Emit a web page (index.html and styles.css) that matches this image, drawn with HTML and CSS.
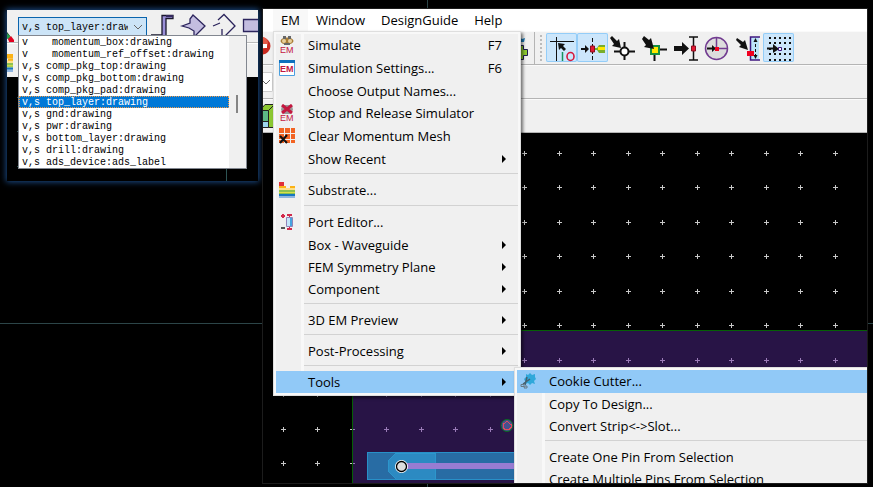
FILE: index.html
```html
<!DOCTYPE html>
<html lang="en">
<head>
<meta charset="utf-8">
<title>Layout editor</title>
<link rel="stylesheet" href="styles.css">
</head>
<body>
<svg class="defs" aria-hidden="true">
  <defs>
    <path id="cross" d="M-2 .5h5M.5-2v5"/>
    <g id="row">
      <use href="#cross" x="283"/><use href="#cross" x="317"/><use href="#cross" x="352"/><use href="#cross" x="386"/><use href="#cross" x="421"/><use href="#cross" x="455"/><use href="#cross" x="490"/><use href="#cross" x="524"/><use href="#cross" x="559"/><use href="#cross" x="593"/><use href="#cross" x="628"/><use href="#cross" x="662"/><use href="#cross" x="697"/><use href="#cross" x="731"/><use href="#cross" x="766"/><use href="#cross" x="800"/><use href="#cross" x="835"/>
    </g>
    <g id="grid">
      <use href="#row" y="153"/><use href="#row" y="187"/><use href="#row" y="222"/><use href="#row" y="256"/><use href="#row" y="291"/><use href="#row" y="325"/><use href="#row" y="360"/><use href="#row" y="394"/><use href="#row" y="429"/><use href="#row" y="463"/>
    </g>
    <g id="substrate">
      <path fill="#e0303a" d="M0 0h5v4H0z"/>
      <path fill="#fbb216" d="M0 4h7v2h4V4h5v4H0z"/>
      <path fill="#fde08a" d="M0 6h16v2H0z"/>
      <path fill="#8cc152" d="M0 8h16v4H0z"/>
      <path fill="#d9e04a" d="M0 10h16v1H0z"/>
      <path fill="#1878c0" d="M0 12h16v2H0z"/>
      <path fill="#8fb5e0" d="M0 14h16v2H0z"/>
    </g>
    <clipPath id="board"><path d="M353 331h520v160H353z"/></clipPath>
  </defs>
</svg>

<div class="desktop">
  <section class="window layers" aria-label="Layer selection">
    <div class="bar bar-top">
      <svg class="pen" width="8" height="24" viewBox="0 0 8 24"><path fill="#111" d="M0 8l3 4-3 3z"/><path fill="#2a9c4c" d="M0 9l4 4-2 3-2-2z"/><path fill="#e2001f" d="M1 15l3-3 3 4v4H3z"/></svg>
      <div class="combo">
        <label class="hidden" for="layer">Layer</label>
        <select id="layer"><option>v,s top_layer:drawing</option><option>v,s gnd:drawing</option></select>
        <svg class="chevron" width="10" height="6" viewBox="0 0 10 6"><path d="M1 1l4 4 4-4"/></svg>
      </div>
      <svg class="shapes" viewBox="150 12 110 26">
        <path fill="#9a8fd8" stroke="#19172c" stroke-width="1.3" d="M151 35h11V15.500h11v3h-7V38"/>
        <path fill="#34295e" d="M166 15h7v2h-7z"/>
        <g fill="#c3bde0" stroke="#2b245c" stroke-width="1.300"><path d="M182 26l8-3v-4l3-4 12 11-11 11v-6l-5-3z"/><path d="M243.500 19.500H265v12h-21.500z"/></g>
        <path fill="none" stroke="#2b245c" stroke-width="1.300" d="M213 26l7-3M218 20l6-5.500 11 11.500-9 9-4 3v-9"/>
      </svg>
    </div>
    <div class="bar bar-bottom">
      <svg width="6" height="18" viewBox="10 0 6 16" preserveAspectRatio="none"><use href="#substrate"/><path fill="#fbb216" d="M10 0h6v4h-6z"/></svg>
    </div>
    <svg class="mini-canvas" viewBox="7 77 251 104"><path d="M226.500 160v21M17 97.500h3M17 131.500h3M17 166.500h3"/></svg>

    <div class="layer-list">
      <ul role="listbox" aria-label="Layers">
        <li role="option">v    momentum_box:drawing</li>
        <li role="option">v    momentum_ref_offset:drawing</li>
        <li role="option">v,s comp_pkg_top:drawing</li>
        <li role="option">v,s comp_pkg_bottom:drawing</li>
        <li role="option">v,s comp_pkg_pad:drawing</li>
        <li role="option" class="selected" aria-selected="true">v,s top_layer:drawing</li>
        <li role="option">v,s gnd:drawing</li>
        <li role="option">v,s pwr:drawing</li>
        <li role="option">v,s bottom_layer:drawing</li>
        <li role="option">v,s drill:drawing</li>
        <li role="option">v,s ads_device:ads_label</li>
      </ul>
      <div class="scroll"><span></span></div>
    </div>
  </section>

  <section class="window editor" aria-label="Editor">
    <nav class="menubar">
      <button class="current">EM</button><button>Window</button><button>DesignGuide</button><button>Help</button>
    </nav>
    <div class="toolbar">
      <svg class="stop" width="8" height="18" viewBox="10 0 8 18"><circle cx="9" cy="9" r="8.500" fill="#c92a20"/><circle cx="9" cy="6" r="6" fill="#e45a48"/><path fill="#fff" d="M4 7h10v4H4z"/></svg>
      <svg class="peek" width="10" height="24" viewBox="520 36 10 24"><path fill="#1c79b5" d="M520 37l3 2 3-1-1 4h-5z"/><path fill="#8cc832" stroke="#1e1b52" d="M519 45.500h5.500v4h4v6h-4v4H519z"/></svg>
      <span class="divider"></span><span class="handle"></span>
      <button class="tool on" aria-label="Snap origin"><svg viewBox="0 0 31 29"><path stroke="#111" d="M4 8.500h24M10.500 4v24"/><path d="M12 10l7 1-2 2 3 3-2 2-3-3-2 2z"/><path stroke="#15915c" stroke-width="1.500" d="M16.500 19v9"/><ellipse cx="24.500" cy="23.500" rx="3.500" ry="4" fill="none" stroke="#d5183c" stroke-width="1.600"/></svg></button>
      <button class="tool on" aria-label="Snap pin"><svg viewBox="0 0 31 29"><path stroke="#111" stroke-dasharray="4 2" d="M15.500 5v23"/><path d="M4 15h4v-3l4 4-4 4v-3H4z"/><path fill="#e41b35" stroke="#8a1020" d="M13.500 13h4v6h-4z"/><path fill="#78ae2c" d="M18 15h2l2-3h6v8h-6l-2-3h-2z"/><path fill="#ffe800" d="M21 14h7v3h-7z"/></svg></button>
      <button class="tool" aria-label="Snap vertex"><svg viewBox="0 0 31 29"><path d="M4 3l5 5 2-2 2 9-9-2 2-2-4-6z"/><path stroke="#111" stroke-width="2" d="M6 18.500h21M16.500 9v18"/><circle cx="16.500" cy="18.500" r="4" fill="#fff" stroke="#111" stroke-width="2"/></svg></button>
      <button class="tool" aria-label="Snap edge"><svg viewBox="0 0 31 29"><path stroke="#111" stroke-width="2" d="M20 16.500h8M15.500 20v8"/><path fill="#ffe800" stroke="#159040" stroke-width="2" d="M12 13h8v8h-8z"/><path d="M5 3l5 4 2-2 3 11-10-2 2-2-4-6z"/></svg></button>
      <button class="tool" aria-label="Snap midpoint"><svg viewBox="0 0 31 29"><path d="M4 13h8V9l7 6.500-7 6.500v-4H4z"/><path fill="none" stroke="#111" stroke-width="1.500" d="M19 4h9M23.500 4v23M19 27h9"/><path fill="#e41b35" stroke="#8a1020" d="M21.500 13h4v5h-4z"/></svg></button>
      <button class="tool" aria-label="Snap center"><svg viewBox="0 0 31 29"><circle cx="15.500" cy="15.500" r="11" fill="#ddd" stroke="#723c91" stroke-width="1.500"/><path fill="none" stroke="#723c91" stroke-width="1.500" d="M15.500 4v11.500H27"/><path d="M6 14.500h5V12l4 3.500-4 3.500v-2.500H6z"/><path fill="#f00020" d="M14 14h4v4h-4z"/></svg></button>
      <button class="tool" aria-label="Snap intersection"><svg viewBox="0 0 31 29"><path fill="#bde3f8" d="M18 4h9v23h-9z"/><path fill="none" stroke="#3f1780" stroke-width="1.500" d="M28 4h-9.500v23H28"/><path stroke="#111" stroke-dasharray="3 2" d="M23.500 6v19"/><path d="M21.500 9l2-4 2 4zM21.500 22l2 4 2-4zM5 5l6 4 2-2 3 10-9-3 2-2-5-5z"/><path fill="#f00020" d="M15 18h7v5h-7z"/></svg></button>
      <button class="tool on" aria-label="Snap grid"><svg viewBox="0 0 31 29"><path fill="none" stroke="#111" stroke-width="2" stroke-dasharray="2 3" d="M6 5h22M6 10h22M6 16h22M6 21h22M6 27h22"/><path d="M4 14.500h6V11l6 5-6 4v-3.500H4z"/><path fill="#fff" stroke="#3f1780" d="M15.500 14.500h3v3h-3z"/></svg></button>
    </div>
    <div class="toolbar">
      <span class="field"><svg class="chevron" width="8" height="6" viewBox="2 0 8 6"><path d="M1 1l4 4 4-4"/></svg></span>
    </div>
    <div class="toolbar">
      <svg width="10" height="24" viewBox="263 104 10 24"><path fill="#8cc832" stroke="#222" d="M260 110.500l5-6h10v6z"/><path fill="#5dba86" stroke="#222" d="M258 110.500h10.500v11H258z"/><path fill="#9bd6ef" stroke="#222" d="M258 121.500h10.500v6H258z"/><path fill="#8cc832" stroke="#222" d="M268.500 110.500l5-5v22h-5z"/></svg>
    </div>
    <svg class="canvas" viewBox="263 133 604 350" preserveAspectRatio="xMinYMin slice">
      <use href="#grid" stroke="#c8c8c8"/>
      <path fill="#281446" stroke="#056005" d="M352.500 330.500h540v180h-540z"/>
      <use href="#grid" stroke="#9a7bb8" clip-path="url(#board)"/>
      <path fill="#286ca4" stroke="#2890c8" d="M367.500 452.500H560v27H367.500z"/>
      <path fill="#2c8ac2" stroke="#2c96cc" d="M435.500 453v26H396l-8-8v-10l8-8z"/>
      <path fill="#987cd2" d="M402 463h150v6H402z"/>
      <circle cx="401.500" cy="466.500" r="6.500" fill="#fff"/>
      <circle cx="401.500" cy="466.500" r="5" fill="#ddd" stroke="#000" stroke-width="1.300"/>
      <circle cx="507" cy="425.500" r="6" fill="#48508e" stroke="#086c20"/>
      <path fill="none" stroke="#e04c60" d="M507 421.500l4 3v3l-2 2h-4l-2-2v-3z"/>
    </svg>

    <div class="menu main-menu">
      <ul>
        <li><button class="item tall"><span class="icon"><svg viewBox="0 0 16 18"><ellipse cx="8" cy="5" rx="6.500" ry="3.500" fill="#a87c35"/><path fill="#666" d="M4 0h3v3H4zM9 0h3v3H9zM5 7h6v2H5z"/><circle cx="5" cy="5" r="2" fill="#e8cf9a"/><circle cx="11" cy="5" r="2" fill="#e8cf9a"/><text x="1" y="17" class="em">EM</text></svg></span><span>Simulate</span><kbd>F7</kbd></button></li>
        <li><button class="item tall"><span class="icon"><svg viewBox="0 0 16 18"><path fill="#fff" stroke="#4a9fe0" d="M.5 2.500h15v14H.5z"/><path fill="#0e70bd" d="M0 1h16v3H0z"/><text x="1" y="13" class="em bold">EM</text></svg></span><span>Simulation Settings...</span><kbd>F6</kbd></button></li>
        <li><button class="item"><span class="icon"></span><span>Choose Output Names...</span></button></li>
        <li><button class="item tall"><span class="icon"><svg viewBox="0 0 16 18"><path fill="#999" d="M3 1h10l1 5-3 4H5L2 6z"/><path stroke="#c3173f" stroke-width="3" d="M3 1l10 8M13 1L3 9"/><text x="1" y="17" class="em">EM</text></svg></span><span>Stop and Release Simulator</span></button></li>
        <li><button class="item tall"><span class="icon"><svg viewBox="0 0 16 18"><path fill="#f26322" d="M0 1h5v5H0zM6 1h5v5H6zM12 1h4v5h-4zM0 7h5v5H0zM6 7h5v5H6zM12 7h4v5h-4zM0 13h5v3H0zM6 13h5v3H6zM12 13h4v3h-4z"/><path stroke="#111" stroke-width="2" d="M1 9l7 7M8 8l-7 8"/></svg></span><span>Clear Momentum Mesh</span></button></li>
        <li><button class="item sub"><span class="icon"></span><span>Show Recent</span></button></li>
        <li class="rule" role="separator"></li>
        <li><button class="item tall"><span class="icon"><svg viewBox="0 0 16 18"><use href="#substrate" y="1"/></svg></span><span>Substrate...</span></button></li>
        <li class="rule" role="separator"></li>
        <li><button class="item tall"><span class="icon"><svg viewBox="0 0 16 18"><path fill="#d22a4c" d="M3 1h2v1h1v2H5v1H3V4H2V2h1zM8 1h5v2H8zM8 15h5v2H8zM10 3h1v12h-1z"/><path fill="#555" d="M2 14h4v2H2z"/><path fill="#c4e6fa" stroke="#8f83b8" d="M7.500 4.500h6v9h-6z"/><path fill="#45a4e0" d="M11 5h2v8h-2z"/></svg></span><span>Port Editor...</span></button></li>
        <li><button class="item sub"><span class="icon"></span><span>Box - Waveguide</span></button></li>
        <li><button class="item sub"><span class="icon"></span><span>FEM Symmetry Plane</span></button></li>
        <li><button class="item sub"><span class="icon"></span><span>Component</span></button></li>
        <li class="rule" role="separator"></li>
        <li><button class="item sub"><span class="icon"></span><span>3D EM Preview</span></button></li>
        <li class="rule" role="separator"></li>
        <li><button class="item sub"><span class="icon"></span><span>Post-Processing</span></button></li>
        <li class="rule" role="separator"></li>
        <li><button class="item sub active"><span class="icon"></span><span>Tools</span></button></li>
      </ul>
    </div>

    <div class="menu tools-menu">
      <ul>
        <li><button class="item tall active"><span class="icon"><svg viewBox="0 0 16 18"><path fill="#2fa8da" d="M6 2l2 1 2-2 2 2 3-1v3l1 2-2 2 1 3-3-1-2 2-2-2-3 1V9L4 7l2-2z"/><path stroke="#47606e" stroke-width="1.500" d="M7 5l-2 8M10 7l-7 5"/><path fill="none" stroke="#687984" d="M1 12.500h3v2H1zM5 14h2v2H4z"/></svg></span><span>Cookie Cutter...</span></button></li>
        <li><button class="item"><span class="icon"></span><span>Copy To Design...</span></button></li>
        <li><button class="item"><span class="icon"></span><span>Convert Strip&lt;-&gt;Slot...</span></button></li>
        <li class="rule" role="separator"></li>
        <li><button class="item"><span class="icon"></span><span>Create One Pin From Selection</span></button></li>
        <li><button class="item"><span class="icon"></span><span>Create Multiple Pins From Selection</span></button></li>
      </ul>
    </div>
  </section>
</div>
</body>
</html>
```
FILE: styles.css
```css
* { box-sizing: border-box; }
body { margin: 0; background: #000; font-family: "Open Sans", "Noto Sans", sans-serif; font-size: 13px; color: #000; }
button { font: inherit; color: inherit; border: 0; background: none; padding: 0; text-align: left; white-space: nowrap; }
ul { list-style: none; margin: 0; padding: 0; }
svg { display: block; flex: none; }
.defs { position: absolute; width: 0; height: 0; }
.hidden { position: absolute; width: 1px; height: 1px; overflow: hidden; clip-path: inset(50%); }

.desktop {
  position: relative;
  height: 100vh;
  overflow: hidden;
  background:
    linear-gradient(#2c4548, #2c4548) 427px 0 / 1px 100% no-repeat,
    linear-gradient(#2c4548, #2c4548) 0 323px / 100% 1px no-repeat,
    #000;
}
.window { position: absolute; display: flex; flex-direction: column; }

/* Layer window */
.layers { left: 7px; top: 10px; width: 251px; height: 171px; background: #000; box-shadow: 0 0 6px 1px #1c4c88; }
.bar { display: flex; background: #f0f0f0; flex: none; overflow: hidden; }
.bar-top { height: 33px; border-bottom: 1px solid #bbb; padding-top: 6px; align-items: flex-start; }
.pen { margin-top: 8px; margin-right: 3px; }
.bar-bottom { height: 34px; border-top: 1px solid #fff; padding-top: 10px; }
.combo { position: relative; width: 129px; height: 20px; flex: none; }
.combo select {
  appearance: none;
  width: 100%;
  height: 100%;
  border: 1px solid #0a64ad;
  border-radius: 0;
  background: #cce4f7;
  color: #000;
  padding: 2px 18px 0 3px;
  font: 10px "Liberation Mono", monospace;
}
.chevron { fill: none; stroke: #666; }
.combo .chevron { position: absolute; right: 4px; top: 8px; }
.shapes { width: 110px; height: 26px; margin-left: 3px; margin-top: -4px; }
.mini-canvas { flex: 1; width: 100%; min-height: 0; stroke: #2d5454; }
.layer-list {
  position: absolute;
  left: 11px;
  top: 25px;
  display: flex;
  width: 229px;
  border: 1px solid #828790;
  background: #fff;
  font: 10px/12px "Liberation Mono", monospace;
}
.layer-list ul { flex: 1; }
.layer-list li { padding: 1px 0 0 3px; white-space: pre; height: 12px; }
.layer-list .selected { background: #0078d7; color: #fff; outline: 1px dotted #f09a4a; outline-offset: -1px; }
.scroll { width: 17px; background: #f0f0f0; padding: 59px 7px 0; }
.scroll span { display: block; width: 2px; height: 18px; background: #858585; }

/* Editor window */
.editor { left: 263px; right: 6px; top: 9px; bottom: 4px; overflow: hidden; background: #000; outline: 1px solid #1c1c1c; }
.menubar { display: flex; flex: none; height: 22px; padding-left: 10px; background: #fff; }
.menubar button { padding: 0 8px; }
.menubar .current { background: #f8f8f8; }
.toolbar { display: flex; flex: none; align-items: center; height: 34px; background: #f0f0f0; border-top: 1px solid #fafafa; border-bottom: 1px solid #b4b4b4; }
.stop { margin-bottom: 4px; }
.peek { margin-left: 248px; }
.divider { width: 1px; height: 100%; margin: 0 5px; background: #b4b4b4; }
.handle { width: 2px; height: 26px; margin-right: 4px; background: repeating-linear-gradient(#bbb 0 2px, transparent 2px 4px); }
.tool { flex: none; width: 31px; height: 29px; margin-top: -2px; border-radius: 2px; fill: #111; }
.tool svg { width: 31px; height: 29px; }
.tool.on { background: #cce6fb; box-shadow: inset 0 0 0 1px #94cdf8; }
.field { display: flex; align-items: center; width: 10px; height: 20px; background: #fff; border: 1px solid #ccc; border-left: 0; border-radius: 0 2px 2px 0; }
.canvas { flex: 1; width: 100%; min-height: 0; shape-rendering: crispEdges; }
.canvas circle { shape-rendering: auto; }

/* Menus */
.menu { position: absolute; border: 1px solid #dedede; background: #f8f8f8; padding: 2px; box-shadow: 2px 2px 3px #0008; }
.menu ul { background: linear-gradient(90deg, #f0f0f0 25px, #f8f8f8 25px 28px, #f0f0f0 28px); }
.main-menu { left: 10px; top: 22px; width: 248px; }
.tools-menu { left: 251px; right: -3px; top: 358px; }
.item { display: flex; align-items: center; width: 100%; height: 22px; padding-right: 16px; padding-bottom: 1px; }
.item.tall { height: 23px; }
.icon { width: 22px; margin-right: 10px; padding-left: 3px; }
.icon svg { width: 16px; height: 18px; }
.item kbd { margin-left: auto; font: inherit; }
.item.sub::after { content: ""; margin-left: auto; margin-right: -4px; border: 4px solid transparent; border-left-color: #000; border-right-width: 0; }
.item.active { background: #91c9f7; }
.rule { height: 9px; margin-left: 28px; padding-top: 3px; }
.rule::before { content: ""; display: block; border-top: 1px solid #d2d2d2; }
.em { font: 9px "Liberation Sans", sans-serif; fill: #c3173f; }
.em.bold { font-weight: bold; }
```
